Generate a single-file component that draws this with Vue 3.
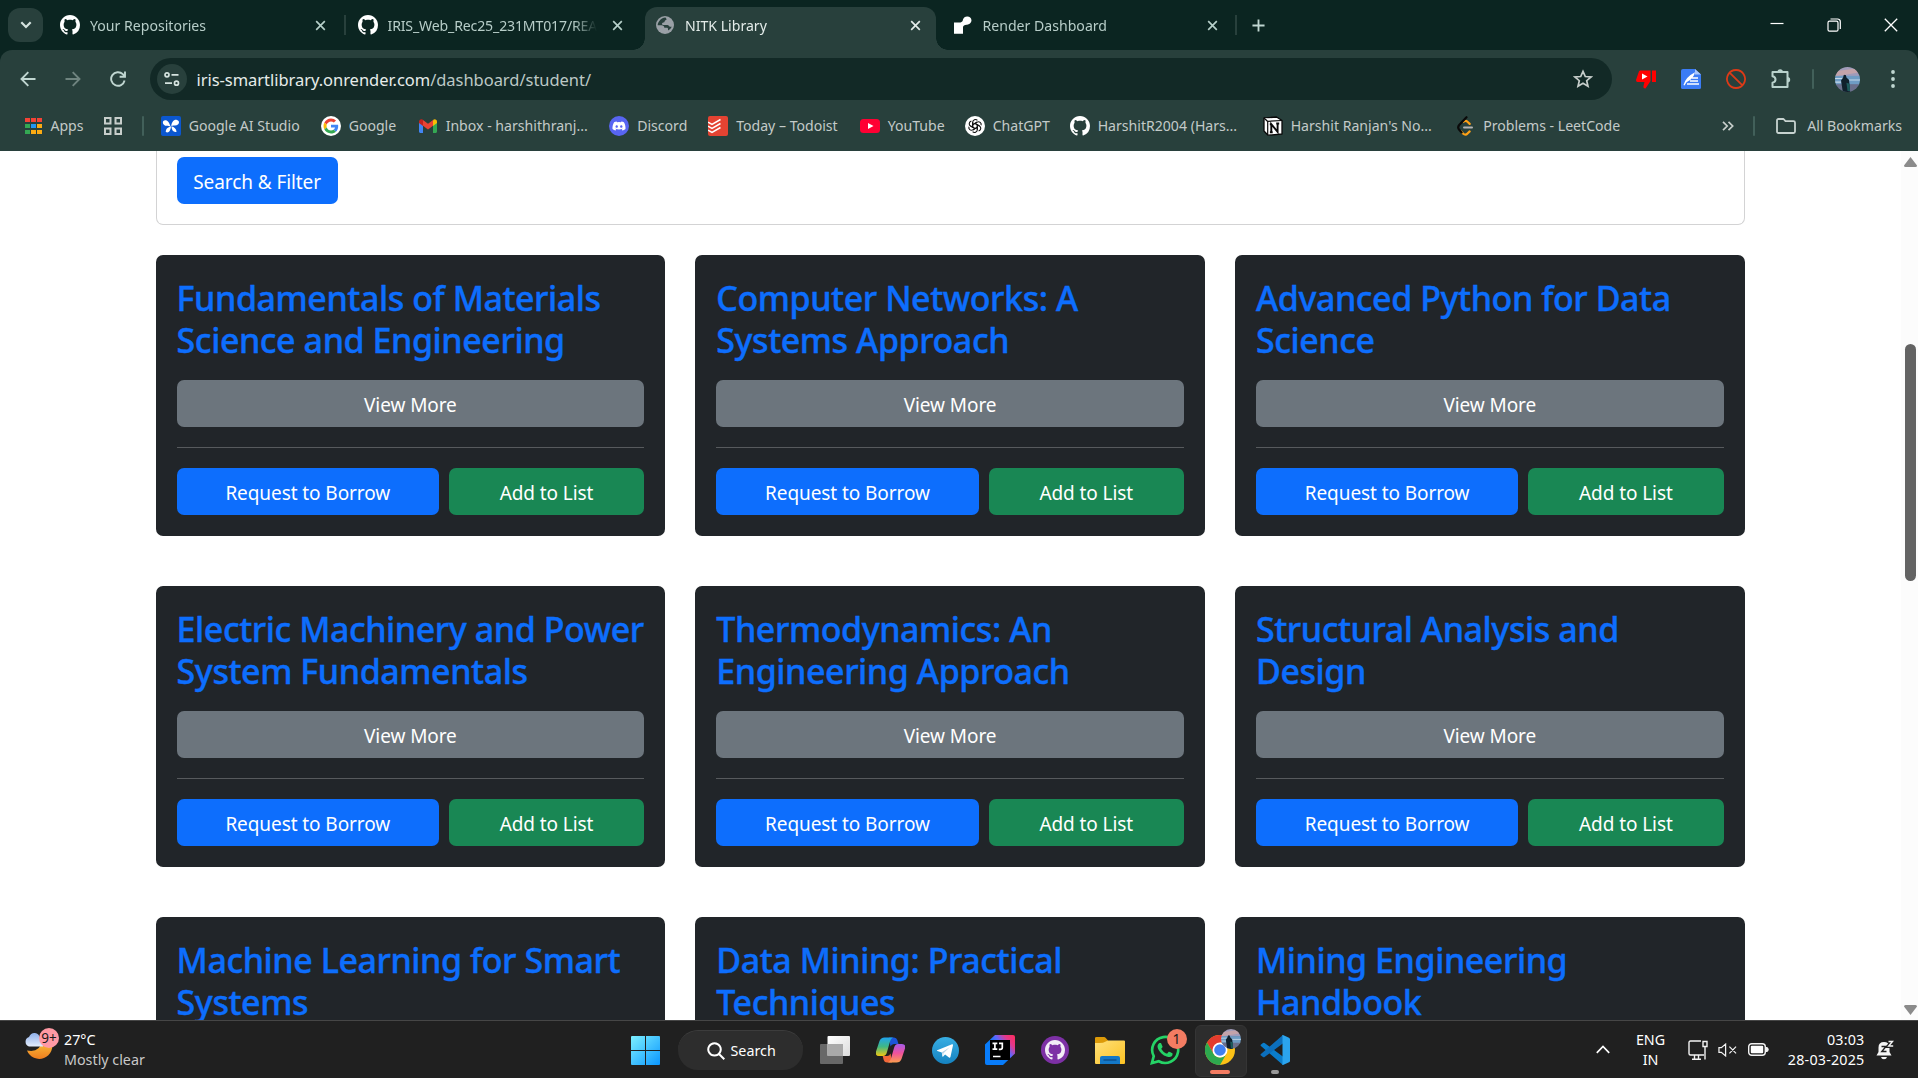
<script setup>
const tabs = [
  { title: 'Your Repositories', icon: 'github' },
  { title: 'IRIS_Web_Rec25_231MT017/README.md', icon: 'github', sep: 'left', tight: true },
  { title: 'NITK Library', icon: 'globe', active: true },
  { title: 'Render Dashboard', icon: 'render', sep: 'right' },
]

const bookmarks = [
  { label: 'Google AI Studio', icon: 'aistudio', width: 160 },
  { label: 'Google', icon: 'google', width: 97 },
  { label: 'Inbox - harshithranj...', icon: 'gmail', width: 191.5 },
  { label: 'Discord', icon: 'discord', width: 99 },
  { label: 'Today – Todoist', icon: 'todoist', width: 151.5 },
  { label: 'YouTube', icon: 'youtube', width: 105 },
  { label: 'ChatGPT', icon: 'chatgpt', width: 105 },
  { label: 'HarshitR2004 (Hars...', icon: 'github', width: 193 },
  { label: "Harshit Ranjan's No...", icon: 'notion', width: 192.5 },
  { label: 'Problems - LeetCode', icon: 'leetcode', width: 190.5 },
]

const books = [
  ['Fundamentals of Materials', 'Science and Engineering'],
  ['Computer Networks: A', 'Systems Approach'],
  ['Advanced Python for Data', 'Science'],
  ['Electric Machinery and Power', 'System Fundamentals'],
  ['Thermodynamics: An', 'Engineering Approach'],
  ['Structural Analysis and', 'Design'],
  ['Machine Learning for Smart', 'Systems'],
  ['Data Mining: Practical', 'Techniques'],
  ['Mining Engineering', 'Handbook'],
]

const appColors = ['#f44336', '#f44336', '#f44336', '#34a853', '#2196f3', '#fbab13', '#34a853', '#fbab13', '#fbab13']
</script>

<template>
  <div class="screen">
    <svg class="defs" width="0" height="0" aria-hidden="true">
      <symbol id="i-github" viewBox="0 0 16 16">
        <path fill="currentColor" d="M8 0C3.58 0 0 3.58 0 8c0 3.54 2.29 6.53 5.47 7.59.4.07.55-.17.55-.38 0-.19-.01-.82-.01-1.49-2.01.37-2.53-.49-2.69-.94-.09-.23-.48-.94-.82-1.13-.28-.15-.68-.52-.01-.53.63-.01 1.08.58 1.23.82.72 1.21 1.87.87 2.33.66.07-.52.28-.87.51-1.07-1.78-.2-3.64-.89-3.64-3.95 0-.87.31-1.59.82-2.15-.08-.2-.36-1.02.08-2.12 0 0 .67-.21 2.2.82.64-.18 1.32-.27 2-.27s1.36.09 2 .27c1.53-1.04 2.2-.82 2.2-.82.44 1.1.16 1.92.08 2.12.51.56.82 1.27.82 2.15 0 3.07-1.87 3.75-3.65 3.95.29.25.54.73.54 1.48 0 1.07-.01 1.93-.01 2.2 0 .21.15.46.55.38A8.01 8.01 0 0 0 16 8c0-4.42-3.58-8-8-8z" />
      </symbol>
      <symbol id="i-globe" viewBox="0 0 20 20">
        <circle cx="10" cy="10" r="9" fill="#9aa0a6" />
        <path fill="#28403c" d="M10.500 2.600C8.500 2.500 5.500 4 4 6.500 3 8 2.700 9 2.700 10.300H6.500Q9.300 10.400 9.300 12.800H12Q13 12.800 13 14V15.600Q15.500 14.500 16.800 11.800C15.500 11.800 14.500 11.800 14 11Q13.500 10 12.300 10H8.300Q7 10 7 8.700 7 7.500 8.300 7.400 9.600 7.400 9.700 6.200 9.700 5.200 11 5 12.300 4.700 10.500 2.600Z" />
      </symbol>
      <symbol id="i-render" viewBox="0 0 20 20">
        <path fill="#fff" d="M18.500 5.200A4.400 4.400 0 0 0 10 4.600C9.700 6.400 9 7.200 7.500 7.400L1 7.500V18.800H10V12.300C10 10.500 11.500 9.800 13.500 9.700A4.500 4.500 0 0 0 18.500 5.200Z" />
      </symbol>
      <symbol id="i-aistudio" viewBox="0 0 20 20">
        <rect width="20" height="20" rx="2" fill="#0b57d0" />
        <path fill="#fff" d="M9.700 10.500C7.500 9.500 3.500 11 2 7.500 1 4 5.200 3.500 7 5.600 8.600 7.300 8.600 9 9.700 10.500ZM10.300 10C10.600 6 13 3.200 16 4c3 .8 2.400 4.600-.4 5.200C13.400 9.700 11.500 9.300 10.300 10ZM10 10.500C7 11 4.600 13 4.800 16c3 1.500 4.800-1.500 5.200-5.500ZM10.400 10.300c3 .7 4.800 2.600 5.200 5.500-3 .9-5-1.500-5.200-5.500Z" />
      </symbol>
      <symbol id="i-google" viewBox="0 0 20 20">
        <circle cx="10" cy="10" r="10" fill="#fff" />
        <g transform="translate(2.500 2.500) scale(.3125)">
          <path fill="#EA4335" d="M24 9.500c3.540 0 6.710 1.220 9.210 3.600l6.850-6.850C35.900 2.380 30.470 0 24 0 14.620 0 6.510 5.380 2.560 13.220l7.980 6.190C12.430 13.720 17.740 9.500 24 9.500z" />
          <path fill="#4285F4" d="M46.980 24.550c0-1.570-.15-3.090-.38-4.550H24v9.020h12.940c-.58 2.960-2.260 5.480-4.780 7.180l7.730 6c4.510-4.180 7.090-10.360 7.090-17.650z" />
          <path fill="#FBBC05" d="M10.530 28.590c-.48-1.450-.76-2.990-.76-4.590s.27-3.140.76-4.590l-7.980-6.190C.92 16.460 0 20.120 0 24c0 3.880.92 7.540 2.560 10.780l7.970-6.190z" />
          <path fill="#34A853" d="M24 48c6.480 0 11.930-2.130 15.890-5.810l-7.730-6c-2.150 1.450-4.920 2.300-8.160 2.300-6.260 0-11.570-4.220-13.470-9.910l-7.980 6.190C6.510 42.620 14.620 48 24 48z" />
        </g>
      </symbol>
      <symbol id="i-gmail" viewBox="0 0 20 20">
        <path fill="#4285f4" d="M1 6v9.500c0 .8.700 1.500 1.500 1.500H5V9z" />
        <path fill="#34a853" d="M15 17h2.500c.8 0 1.500-.7 1.500-1.500V6l-4 3z" />
        <path fill="#fbbc04" d="M15 5v5l4-3V5.500c0-2-2.200-3-3.700-1.800z" />
        <path fill="#ea4335" d="M5 9.800V4l5 3.800L15 4v5.800l-5 3.800z" />
        <path fill="#c5221f" d="M1 5.500V7l4 3V4l-.5-.4C3 2.500 1 3.500 1 5.500z" />
      </symbol>
      <symbol id="i-discord" viewBox="0 0 20 20">
        <circle cx="10" cy="10" r="10" fill="#5865f2" />
        <path fill="#fff" d="M14.900 6.300a9 9 0 0 0-2.500-.8l-.4.700a9 9 0 0 0-4 0l-.4-.7a9 9 0 0 0-2.500.8C3.700 8.600 3.300 10.900 3.500 13.100c1 .8 2 1.200 3.100 1.500l.7-1.100-1-.5.2-.2c2.200 1 4.800 1 7 0l.2.200-1 .5.700 1.100c1.100-.3 2.100-.7 3.100-1.500.2-2.600-.4-4.800-1.600-6.800zM7.700 11.800c-.7 0-1.200-.6-1.200-1.300s.5-1.300 1.200-1.300 1.200.6 1.200 1.300-.5 1.300-1.200 1.300zm4.600 0c-.7 0-1.200-.6-1.200-1.300s.5-1.300 1.200-1.300 1.200.6 1.200 1.300-.5 1.300-1.200 1.300z" />
      </symbol>
      <symbol id="i-todoist" viewBox="0 0 20 20">
        <rect width="20" height="20" rx="2" fill="#e44332" />
        <path fill="none" stroke="#fff" stroke-width="1.500" d="M0 6.200l4 2.100 8.500-4.800M0 10.200l4 2.100 8.500-4.800M0 14.200l4 2.100 8.500-4.800" />
      </symbol>
      <symbol id="i-youtube" viewBox="0 0 20 20">
        <rect y="3" width="20" height="14" rx="3.500" fill="#ff0033" />
        <path fill="#fff" d="M8 7l5.500 3L8 13z" />
      </symbol>
      <symbol id="i-chatgpt" viewBox="0 0 20 20">
        <circle cx="10" cy="10" r="10" fill="#fff" />
        <g fill="none" stroke="#111" stroke-width="1.100">
          <path v-for="a in 6" :key="a" :transform="`rotate(${a * 60} 10 10)`" d="M7.700 11.200V6.200a2.700 2.700 0 0 1 4.700-1.800M7.700 8.700l4.500-2.600" />
        </g>
      </symbol>
      <symbol id="i-notion" viewBox="0 0 20 20">
        <path fill="#fff" stroke="#0a0a0a" stroke-width="1.300" stroke-linejoin="round" d="M1 2l12.500-1L19 4.500V18L5 19.200 1 15z" />
        <path fill="#fff" stroke="#0a0a0a" stroke-width="1.200" d="M1 2l3.500 3.300L19 4.500M4.700 5.300V19" />
        <path fill="none" stroke="#0a0a0a" stroke-width="1.900" d="M8.300 16.300V8.200L14.600 15.800V7.400M6.800 8.200h2M13.200 7.500h3M6.900 16.300h2.800" />
      </symbol>
      <symbol id="i-leetcode" viewBox="0 0 20 20">
        <path fill="none" stroke="#b3b3b3" stroke-width="2" stroke-linecap="round" d="M9 11.500h8" />
        <path fill="none" stroke="#ffa116" stroke-width="2.200" stroke-linecap="round" d="M8.500 5.800q2-2 4 0l2.200 2.100M6.200 15.500l1.800 2q2.500 2.300 4.500 0l2.200-2.100" />
        <path fill="none" stroke="#0a0a0a" stroke-width="2.200" stroke-linecap="round" d="M11.500 1.200L4.200 9q-2 2.600 0 4.800l2.400 2.600" />
      </symbol>
      <symbol id="i-avatar" viewBox="0 0 24 24">
        <clipPath id="round"><circle cx="12" cy="12" r="12" /></clipPath>
        <g clip-path="url(#round)">
          <rect width="24" height="9" fill="#a09bb9" />
          <path fill="#d3a7a4" d="M0 4L24 1v4L0 9z" opacity=".7" />
          <rect y="8.500" width="24" height="9" fill="#6f9cc4" />
          <path stroke="#c5d8e8" stroke-width="1" d="M0 11h8M13 12.500h11M0 14.500h6" />
          <rect y="16.500" width="24" height="8" fill="#6b6f8c" />
          <path fill="#10202c" d="M8.300 8q1.200-1.200 2.200 0l.5 2 2.500 2.500L14.500 24H7.500L5.800 13l2-3z" />
          <path fill="#1d5a5c" d="M11 15l3 1 .5 7h-2.500z" />
        </g>
      </symbol>
      <symbol id="i-x" viewBox="0 0 12 12">
        <path fill="none" stroke="currentColor" stroke-width="1.800" d="M1.300 1.300l9.400 9.400M10.700 1.300l-9.400 9.400" />
      </symbol>
    </svg>

    <header class="tabstrip">
      <button class="tab-search">
        <svg width="12" height="8" viewBox="0 0 12 8"><path fill="none" stroke="#d5e3df" stroke-width="2.200" d="M1.300 1.300L6 6l4.700-4.700" /></svg>
      </button>
      <div v-for="t in tabs" :key="t.title" class="tab" :class="[{ active: t.active, tight: t.tight }, t.sep && 'sep-' + t.sep]">
        <svg class="favicon"><use :href="'#i-' + t.icon" /></svg>
        <span class="tab-title">{{ t.title }}</span>
        <svg class="tab-close"><use href="#i-x" /></svg>
      </div>
      <svg class="new-tab" viewBox="0 0 14 14"><path stroke="#c0d6d1" stroke-width="2" d="M7 .5v13M.5 7h13" /></svg>
      <div class="win-controls">
        <svg viewBox="0 0 14 14"><path stroke="#fff" stroke-width="1.200" d="M.5 5.500h13" /></svg>
        <svg viewBox="0 0 14 14" fill="none" stroke="#fff" stroke-width="1.200"><rect x="1" y="3.200" width="10" height="10" rx="1.500" /><path d="M3.500 1h7A2.700 2.700 0 0 1 13.300 3.800V11" /></svg>
        <svg viewBox="0 0 14 14"><path stroke="#fff" stroke-width="1.300" d="M.8.8l12.400 12.400M13.200.8L.8 13.200" /></svg>
      </div>
    </header>

    <section class="toolbar">
      <div class="nav-row">
        <svg class="nav" viewBox="0 0 16 16"><path fill="none" stroke="#c0d6d1" stroke-width="1.900" d="M15.500 8H1.800M8.300 1.200L1.500 8l6.800 6.800" /></svg>
        <svg class="nav" viewBox="0 0 16 16"><path fill="none" stroke="#6f847f" stroke-width="1.900" d="M.5 8h13.700M7.700 1.200L14.500 8l-6.800 6.800" /></svg>
        <svg class="nav" viewBox="0 0 16 16"><path fill="none" stroke="#c0d6d1" stroke-width="1.900" d="M14.600 9.500A6.800 6.800 0 1 1 12.800 3.200L14.700 5.300M15 .5v5.300H9.600" /></svg>
        <div class="omnibox">
          <span class="site-chip">
            <svg width="18" height="16" viewBox="0 0 18 16" fill="none" stroke="#d5e3df" stroke-width="1.700"><circle cx="4" cy="3.800" r="2" /><path d="M8.500 3.800H15.500M2 12.200H9" /><circle cx="13.500" cy="12.200" r="2" /></svg>
          </span>
          <span class="url">iris-smartlibrary.onrender.com<i>/dashboard/student/</i></span>
          <svg class="star" viewBox="0 0 20 20"><path fill="none" stroke="#c7cecb" stroke-width="1.700" d="M10 2.300l2.300 5.200 5.700.5-4.300 3.700 1.300 5.600-5-3-5 3 1.300-5.600L2 8l5.700-.5z" /></svg>
        </div>
        <div class="extensions">
          <svg viewBox="0 0 20 20"><path fill="#f00" d="M4 1.500H14.500V12L9.500 19.500Q7 19.500 7.500 17L8.500 13H1.500Q0 13 0 11L3 2.300ZM16 1.500h4V13h-4z" /><path fill="#fff" d="M6 4.500l5.500 3L6 10.500z" /></svg>
          <svg viewBox="0 0 20 20"><path fill="#3b7cf5" d="M2 0h12l6 5.500V18.500Q20 20 18.500 20H1.500Q0 20 0 18.500V1.500Q0 0 2 0z" /><path fill="#a9c7fb" d="M14 0l6 5.500h-6z" /><path fill="#fff" d="M2.500 16Q4.500 8 14 3.200 12.500 10 5.500 13.300L3.500 16.500z" /><path stroke="#fff" stroke-width="1.400" d="M11 9h6M9 12h8M6 15h12" /></svg>
          <svg viewBox="0 0 20 20"><path fill="none" stroke="#dd3a17" stroke-width="1.800" d="M10 1a9 9 0 1 0 .01 0zM3.800 3.800l12.400 12.400" /></svg>
          <svg viewBox="0 0 20 20"><path fill="none" stroke="#b9d2cc" stroke-width="2" stroke-linejoin="round" d="M1.500 3H16.500V18H1.500V13.700Q4.500 13 4.500 10.500T1.500 7.300Z" /><path fill="#b9d2cc" d="M6.500 3a2.700 2.700 0 0 1 5.400 0zM16.500 8a2.700 2.700 0 0 1 0 5.400z" /></svg>
        </div>
        <i class="vsep toolbar-sep"></i>
        <svg class="avatar"><use href="#i-avatar" /></svg>
        <svg class="kebab" viewBox="0 0 4 18" fill="#c0d6d1"><circle cx="2" cy="2" r="1.900" /><circle cx="2" cy="9" r="1.900" /><circle cx="2" cy="16" r="1.900" /></svg>
      </div>

      <nav class="bookmarks">
        <div class="apps">
          <span class="apps-grid"><i v-for="(c, n) in appColors" :key="n" :style="{ background: c }"></i></span>
          <span>Apps</span>
        </div>
        <svg class="groups" viewBox="0 0 18 18" fill="none" stroke="#c7cecb" stroke-width="2"><path d="M1 1h5.500v5.500H1zM11.500 1H17v5.500h-5.500zM1 11.500h5.500V17H1zM11.500 11.500H17V17h-5.500z" /></svg>
        <i class="vsep"></i>
        <div class="bm-list">
          <div v-for="b in bookmarks" :key="b.label" class="bm" :style="{ width: b.width + 'px' }">
            <svg class="favicon"><use :href="'#i-' + b.icon" /></svg>
            <span>{{ b.label }}</span>
          </div>
        </div>
        <svg class="more" viewBox="0 0 12 10"><path fill="none" stroke="#c7cecb" stroke-width="1.700" d="M1 .8L5.200 5 1 9.200M6.500.8L10.700 5 6.500 9.200" /></svg>
        <i class="vsep"></i>
        <svg class="folder" viewBox="0 0 20 16"><path fill="none" stroke="#c7d3d0" stroke-width="1.800" stroke-linejoin="round" d="M1 2.500Q1 1 2.500 1H7.500L9.500 3.200H17.500Q19 3.200 19 4.700V13.500Q19 15 17.500 15H2.500Q1 15 1 13.500Z" /></svg>
        <span>All Bookmarks</span>
      </nav>
    </section>

    <main class="viewport">
      <div class="page">
        <div class="filter-card"><button class="btn primary">Search &amp; Filter</button></div>
        <div class="grid">
          <article v-for="b in books" :key="b[0]" class="card">
            <h3>{{ b[0] }}<br />{{ b[1] }}</h3>
            <button class="btn secondary">View More</button>
            <hr />
            <div class="actions">
              <button class="btn primary borrow">Request to Borrow</button>
              <button class="btn success add">Add to List</button>
            </div>
          </article>
        </div>
      </div>
      <div class="scrollbar">
        <svg width="13" height="10" viewBox="0 0 13 10"><path fill="#8b8b8b" d="M6.500 0L13 8.500Q13 10 11.500 10h-10Q0 10 0 8.500z" /></svg>
        <div class="track"><div class="thumb"></div></div>
        <svg width="13" height="10" viewBox="0 0 13 10"><path fill="#8b8b8b" d="M6.500 10L13 1.500Q13 0 11.500 0h-10Q0 0 0 1.500z" /></svg>
      </div>
    </main>

    <footer class="taskbar">
      <div class="weather">
        <div class="weather-icon">
          <svg width="34" height="36" viewBox="0 0 34 36">
            <defs>
              <linearGradient id="moon" x1="0" y1="0" x2="0" y2="1"><stop offset="0" stop-color="#f9c23c" /><stop offset="1" stop-color="#ee7d1e" /></linearGradient>
              <linearGradient id="cloud" x1="0" y1="0" x2="0" y2="1"><stop offset="0" stop-color="#8fb0ea" /><stop offset="1" stop-color="#e4edfc" /></linearGradient>
            </defs>
            <path fill="url(#moon)" d="M27.500 15a12.500 12.500 0 1 1-24.500 9.500Q16 27 18 15z" />
            <path fill="url(#cloud)" d="M5 20.500a5 5 0 0 1 0-9.500Q7 6.500 11 7q4 .3 5 5h3v8.500z" />
          </svg>
          <span class="badge-pink">9+</span>
        </div>
        <div class="weather-text"><b>27°C</b><span>Mostly clear</span></div>
      </div>

      <div class="dock">
        <div class="slot">
          <svg width="29" height="29" viewBox="0 0 29 29"><defs><linearGradient id="win" x1="0" y1="0" x2="1" y2="1"><stop offset="0" stop-color="#7df0ff" /><stop offset="1" stop-color="#0a96ff" /></linearGradient></defs><path fill="url(#win)" d="M1 0H14V14H0V1Q0 0 1 0zM15 0H28Q29 0 29 1V14H15zM0 15H14V29H1Q0 29 0 28zM15 15H29V28Q29 29 28 29H15z" /></svg>
        </div>
        <div class="slot search-slot">
          <div class="search"><svg width="18" height="18" viewBox="0 0 18 18"><path fill="none" stroke="#fff" stroke-width="2" d="M7.500 1.200a6.200 6.200 0 1 0 .01 0zM12 12l5.300 5.300" /></svg><span>Search</span></div>
        </div>
        <div class="slot">
          <svg width="30" height="28" viewBox="0 0 30 28"><defs><linearGradient id="tv" x1="0" y1="0" x2="1" y2="1"><stop offset="0" stop-color="#fff" /><stop offset="1" stop-color="#dcdcdc" /></linearGradient></defs><rect y="8" width="23" height="20" rx="1" fill="#686868" /><rect x="7.500" width="22.500" height="20" rx="1" fill="url(#tv)" /><path fill="#a9a9a9" d="M7.500 8H23V20H7.500z" /></svg>
        </div>
        <div class="slot">
          <svg width="29" height="26" viewBox="0 0 29 26">
            <defs>
              <linearGradient id="cpa" x1="0" y1="0" x2="0" y2="1"><stop offset="0" stop-color="#1fa4ee" /><stop offset=".5" stop-color="#41b883" /><stop offset="1" stop-color="#f2c811" /></linearGradient>
              <linearGradient id="cpb" x1="0" y1="0" x2="0" y2="1"><stop offset="0" stop-color="#a55bea" /><stop offset=".5" stop-color="#f0529b" /><stop offset="1" stop-color="#fb9d4f" /></linearGradient>
            </defs>
            <path fill="#1b55d8" d="M13 .5h5q2.500 0 3.300 2.500L22.500 7H18q-2.500 0-3.500 2.500z" />
            <path fill="url(#cpa)" d="M8.500.5H17Q14.800 1.500 14 4.500L11 15q-1 4-4 4H3q-4 0-3-4.500L3.500 4Q4.800.5 8.500.5z" />
            <path fill="#f2683a" d="M16 25.500H11q-2.500 0-3.300-2.500L6.700 19H11q2.500 0 3.500-2.500z" />
            <path fill="url(#cpb)" d="M20.500 25.500H12q2.200-1 3-4L18 11q1-4 4-4h4q4 0 3 4.500L25.500 22q-1.300 3.500-5 3.500z" />
          </svg>
        </div>
        <div class="slot">
          <svg width="27" height="27" viewBox="0 0 27 27"><defs><linearGradient id="tg" x1="0" y1="0" x2="0" y2="1"><stop offset="0" stop-color="#38aee3" /><stop offset="1" stop-color="#1582c0" /></linearGradient></defs><circle cx="13.500" cy="13.500" r="13.500" fill="url(#tg)" /><path fill="#fff" d="M5.200 13.200L20 7.300q1.200-.3 1 1L18.500 19.800q-.4 1.300-1.500.7l-3.900-2.900-1.900 1.900q-.8.600-.9-.5l-.5-3.600-4.500-1.400q-1-.4-.1-.8z" /><path fill="#b7d4e8" d="M9.900 15.200l7.800-5-6.200 6-.4 3z" /></svg>
        </div>
        <div class="slot">
          <svg width="30" height="30" viewBox="0 0 30 30"><defs><linearGradient id="ij" x1="1" y1="0" x2="0" y2=".8"><stop offset="0" stop-color="#ff2c5a" /><stop offset=".22" stop-color="#e5388a" /><stop offset=".42" stop-color="#5b67ff" /><stop offset=".6" stop-color="#087cfa" /></linearGradient></defs><path fill="url(#ij)" d="M10 0H28Q30 0 30 2V18.500L18 30H2Q0 30 0 28V9.500z" /><rect x="5" y="5" width="20" height="20" /><path fill="none" stroke="#fff" stroke-width="1.700" d="M7.500 8.300h4.800M9.900 8v6M7.500 14.200h4.800M14 8.300h3.300v4.200q0 1.800-2 1.800h-1.500M8 21.500h7.500" /></svg>
        </div>
        <div class="slot"><span class="gh-desktop"><svg><use href="#i-github" /></svg></span></div>
        <div class="slot">
          <svg width="30" height="28" viewBox="0 0 30 28"><defs><linearGradient id="fx" x1="0" y1="0" x2="1" y2="1"><stop offset="0" stop-color="#ffe07a" /><stop offset="1" stop-color="#fcc222" /></linearGradient></defs><path fill="#dd9a08" d="M0 2Q0 1 1.500 1H9q1 0 1.800 1L13 4.500v6H0z" /><path fill="url(#fx)" d="M0 7q5 0 8-.2L13 4.500H29q1 0 1 1V27q0 1-1 1H1q-1 0-1-1z" /><path fill="#1478c8" d="M5 28V22q0-2 2-2H23q2 0 2 2v6z" /><path stroke="#0c4b87" stroke-width="1.300" d="M8.500 24h13" /></svg>
        </div>
        <div class="slot">
          <svg width="30" height="30" viewBox="0 0 24 24" fill="#25d366"><path d="M17.472 14.382c-.297-.149-1.758-.867-2.030-.967-.273-.099-.471-.148-.670.150-.197.297-.767.966-.940 1.164-.173.199-.347.223-.644.075-.297-.150-1.255-.463-2.390-1.475-.883-.788-1.480-1.761-1.653-2.059-.173-.297-.018-.458.130-.606.134-.133.298-.347.446-.520.149-.174.198-.298.298-.497.099-.198.050-.371-.025-.520-.075-.149-.669-1.612-.916-2.207-.242-.579-.487-.500-.669-.510-.173-.008-.371-.010-.570-.010-.198 0-.520.074-.792.372-.272.297-1.040 1.016-1.040 2.479 0 1.462 1.065 2.875 1.213 3.074.149.198 2.096 3.200 5.077 4.487.709.306 1.262.489 1.694.625.712.227 1.360.195 1.871.118.571-.085 1.758-.719 2.006-1.413.248-.694.248-1.289.173-1.413-.074-.124-.272-.198-.570-.347" /><path fill="none" stroke="#25d366" stroke-width="2.100" d="M1.500 22.500l1.500-5.600A10.400 10.400 0 1 1 7 21z" /></svg>
          <span class="badge-coral">1</span>
        </div>
        <div class="slot running">
          <svg width="30" height="30" viewBox="0 0 48 48"><circle cx="24" cy="24" r="24" fill="#fbc116" /><path fill="#e33b2e" d="M3.200 12A24 24 0 0 1 44.800 12H24L13.600 30z" /><path fill="#2da94f" d="M3.200 12A24 24 0 0 0 24 48L34.400 30A12 12 0 0 1 13.600 30z" /><circle cx="24" cy="24" r="12" fill="#fff" /><circle cx="24" cy="24" r="9.300" fill="#3f7ff0" /></svg>
          <svg class="mini-avatar"><use href="#i-avatar" /></svg>
          <i class="active-pill"></i>
        </div>
        <div class="slot">
          <svg width="30" height="30" viewBox="0 0 30 30"><path fill="#0a7dcb" d="M1 9.500L3 8q.8-.5 1.600.1L23.500 22V29.500q-1.200 0-2-.8L.9 11q-.8-.8.1-1.500z" /><path fill="#0c6fbd" d="M1 20.500L3 22q.8.500 1.600-.1L23.500 8V.5q-1.200 0-2 .8L.9 19q-.8.800.1 1.500z" /><path fill="#2ba4ee" d="M22 .3q.7-.5 1.500-.1L29 2.800q1 .5 1 1.500V25.700q0 1-1 1.500L23.500 29.800q-1 .3-1.800-.4.800.3.800-1V1.600q0-1-.5-1.300z" /></svg>
          <i class="idle-pill"></i>
        </div>
      </div>

      <div class="tray">
        <svg class="tray-up" viewBox="0 0 14 9"><path fill="none" stroke="#fff" stroke-width="1.700" d="M.8 7.800L7 1.500l6.200 6.300" /></svg>
        <div class="lang"><span>ENG</span><span>IN</span></div>
        <svg class="tray-net" viewBox="0 0 20 20" fill="none" stroke="#f2f2f2" stroke-width="1.400"><path d="M13 1H2.500Q1 1 1 2.500V13.500Q1 15 2.500 15H16M4 19.200h9M6.500 15v4M10.500 15v4M15 1.500h4v5h-4zM17 6.500V19.500" /></svg>
        <svg class="tray-vol" viewBox="0 0 20 14" fill="none" stroke="#f2f2f2" stroke-width="1.300"><path d="M1 4.500H3.500L8 .8V13.200L3.500 9.500H1zM12 3.500l7 7M19 3.500l-7 7" /></svg>
        <svg class="tray-bat" viewBox="0 0 21 13"><rect x=".7" y=".7" width="16.600" height="11.600" rx="3" fill="none" stroke="#f2f2f2" stroke-width="1.400" /><rect x="2.800" y="2.800" width="12.400" height="7.400" rx="1" fill="#fff" /><path fill="#f2f2f2" d="M18 4h1.200q1.500 1 1.500 2.500T19.200 9H18z" /></svg>
        <div class="clock"><span>03:03</span><span>28-03-2025</span></div>
        <svg class="tray-bell" viewBox="0 0 18 20"><path fill="#f5f5f5" d="M8 2Q13 2 13.500 7V12L15.500 15.500H.5L2.500 12V7.500Q2.500 2 8 2zM5 17h6q-.5 2.300-3 2.300T5 17z" /><path fill="none" stroke="#202020" stroke-width="1.400" d="M5.500 6.500h4.500L5.800 11.500h4.700" /><path fill="none" stroke="#202020" stroke-width="4" d="M12.500 1.500h4L12.700 6h4" /><path fill="none" stroke="#f5f5f5" stroke-width="1.400" d="M12.500 1.500h4L12.700 6h4.500" /></svg>
      </div>
    </footer>
  </div>
</template>

<style>
body { overflow: hidden; }
</style>

<style scoped>
* { box-sizing: border-box; }
.screen { width: 1918px; height: 1078px; display: flex; flex-direction: column; overflow: hidden; font-family: "Noto Sans", "Open Sans", sans-serif; font-size: 14.100px; background: #0b2521; }
.defs { position: absolute; }
svg { display: block; flex: none; }
button { font: inherit; border: 0; padding: 0; }
span { white-space: nowrap; }

.tabstrip { height: 50px; display: flex; align-items: flex-start; padding-left: 8px; flex: none; }
.tab-search { width: 35px; height: 34px; margin: 8px 3px 0 0; border-radius: 12px; background: #28403c; display: flex; align-items: center; justify-content: center; }
.tab { position: relative; width: 297.500px; height: 50px; padding-left: 14px; display: flex; align-items: center; color: #b7cdc8; }
.tab > * { position: relative; }
.favicon { width: 20px; height: 20px; color: #fff; }
.tab-title { width: 210px; margin-left: 10px; overflow: hidden; mask-image: linear-gradient(90deg, #000 185px, transparent 209px); }
.tab.tight .tab-title { letter-spacing: -0.150px; }
.tab-close { width: 11px; height: 11px; margin-left: 14.500px; color: #b7d0ca; }
.tab.active { color: #e3ebe9; }
.tab.active .tab-close { color: #e3ebe9; }
.tab.active::before { content: ""; position: absolute; inset: 7px 3px 0 4px; background: #28403c; border-radius: 12px 12px 0 0; }
.tab.active::after { content: ""; position: absolute; left: -8px; right: -9px; bottom: 0; height: 12px; background: radial-gradient(circle at 0 0, transparent 11.500px, #28403c 12px) left / 12px 12px no-repeat, radial-gradient(circle at 12px 0, transparent 11.500px, #28403c 12px) right / 12px 12px no-repeat; }
.sep-left::before, .sep-right::before { content: ""; position: absolute; top: 15px; width: 2px; height: 20px; background: #28403c; }
.sep-left::before { left: 0; }
.sep-right::before { right: -1px; }
.new-tab { width: 13px; height: 13px; margin: 19px 0 0 16px; }
.win-controls { margin: 18px 20px 0 auto; display: flex; gap: 43px; }
.win-controls svg { width: 14px; height: 14px; }

.toolbar { height: 101px; flex: none; background: #28403c; border-radius: 12px 12px 0 0; display: flex; flex-direction: column; }
.nav-row { height: 58px; display: flex; align-items: center; padding-left: 20px; }
.nav { width: 16px; height: 16px; margin-right: 29px; }
.nav:nth-child(3) { margin-right: 24px; }
.omnibox { width: 1462px; height: 42px; border-radius: 21px; background: #122926; display: flex; align-items: center; padding: 0 19px 0 7px; }
.site-chip { width: 30px; height: 30px; border-radius: 50%; background: #28403c; display: flex; align-items: center; justify-content: center; }
.url { margin-left: 9.500px; font-size: 16.500px; color: #e6ecea; letter-spacing: -0.040px; }
.url i { font-style: normal; color: #bcc8c5; }
.star { width: 20px; height: 20px; margin-left: auto; }
.extensions { display: flex; gap: 25.200px; margin-left: 23.500px; }
.extensions svg { width: 20px; height: 20px; }
.vsep { width: 2px; height: 20px; border-radius: 1px; background: #42605a; flex: none; }
.toolbar-sep { margin-left: 21px; }
.avatar { width: 25px; height: 25px; margin-left: 21px; }
.kebab { width: 4px; height: 18px; margin-left: 30.500px; }

.bookmarks { height: 36px; display: flex; align-items: center; padding: 0 16px 0 25px; color: #c3cac8; }
.bookmarks span { margin-top: -2px; }
.apps { display: flex; align-items: center; gap: 8.500px; width: 79.500px; }
.bookmarks .apps-grid { margin-top: 0; display: grid; grid-template-columns: repeat(3, 4.500px); gap: 1.700px; grid-auto-rows: 4.500px; }
.groups { width: 18px; height: 18px; }
.bookmarks .vsep { margin-left: 19.500px; }
.bm-list { display: flex; margin-left: 17px; }
.bm { display: flex; align-items: center; gap: 8px; }
.more { width: 12px; height: 10px; margin-left: 76px; }
.folder { width: 20px; height: 16px; margin-left: 21px; margin-right: 11px; }

.viewport { height: 869px; flex: none; display: flex; overflow: hidden; background: #fff; }
.page { width: 1901px; padding-left: 155.600px; height: 869px; overflow: hidden; }
.filter-card { width: 1589.800px; height: 74px; border: 1px solid #d3d3d4; border-top: 0; border-radius: 0 0 7px 7px; padding: 6px 20px 0; }
.filter-card .btn { width: 161px; }
.grid { display: grid; grid-template-columns: repeat(3, 509.600px); column-gap: 30.100px; row-gap: 50px; margin-top: 30px; }
.card { height: 281px; padding: 21px; border-radius: 7px; background: #212529; }
h3 { margin: 0 0 20px; font-size: 34px; line-height: 42px; font-weight: 500; letter-spacing: -0.430px; color: #0d6efd; -webkit-text-stroke: .4px #0d6efd; height: 84px; white-space: nowrap; padding-top: 1px; }
.btn { display: block; height: 47px; border-radius: 7px; color: #fff; font-size: 19px; line-height: 45px; padding-top: 3px; letter-spacing: -0.080px; text-align: center; }
.primary { background: #0d6efd; }
.secondary { background: #6c757d; width: 100%; }
.success { background: #198754; }
.btn.primary, .btn.secondary, .btn.success { padding-top: 4px; line-height: 43px; padding-bottom: 0; }
.btn { display: flex; justify-content: center; align-items: flex-start; }
hr { border: 0; height: 1px; background: #575a5d; margin: 20px 0; }
.actions { display: flex; gap: 10px; }
.borrow { width: 262.300px; }
.add { flex: 1; }
.scrollbar { width: 17px; background: #fcfcfc; display: flex; flex-direction: column; align-items: center; padding: 6px 0 5px 2px; }
.track { flex: 1; padding-top: 177px; }
.thumb { width: 11px; height: 237px; border-radius: 6px; background: #636363; }

.taskbar { position: relative; height: 58px; flex: none; background: #202020; border-top: 1px solid #464646; display: flex; align-items: center; color: #fff; font-size: 14.300px; }
.weather { display: flex; width: 617.500px; height: 100%; padding-left: 24px; }
.weather-icon { position: relative; width: 40px; padding-top: 5px; }
.badge-pink { position: absolute; left: 15px; top: 7px; width: 20px; height: 20px; border-radius: 50%; background: #ff99a4; color: #1a1a1a; text-align: center; line-height: 20px; font-size: 13.500px; }
.weather-text, .lang, .clock { display: flex; flex-direction: column; line-height: 20px; }
.weather-text { padding-top: 9px; }
.weather-text b { font-weight: 400; }
.weather-text span { color: #c8c8c8; }
.dock { display: flex; height: 100%; }
.slot { position: relative; width: 55px; height: 100%; display: flex; align-items: center; justify-content: center; padding-top: 1px; }
.search-slot { width: 135px; }
.search { width: 125px; height: 40px; border-radius: 20px; background: #2d2d2d; border-top: 1px solid #3c3c3c; display: flex; align-items: center; gap: 6px; padding-left: 29px; }
.gh-desktop { width: 28px; height: 28px; border-radius: 50%; background: #7d30a5; display: flex; align-items: center; justify-content: center; color: #f3ecf7; }
.gh-desktop svg { width: 20px; height: 20px; }
.badge-coral { position: absolute; left: 29px; top: 8px; width: 20px; height: 20px; border-radius: 50%; background: #f47c62; color: #1a1a1a; text-align: center; line-height: 20px; font-size: 14px; }
.running::before { content: ""; position: absolute; left: 2.500px; top: 4px; width: 50px; height: 50px; border-radius: 6px; background: #2d2d2d; border: 1px solid #353535; }
.running svg { position: relative; }
.running .mini-avatar { position: absolute; left: 28.500px; top: 8px; width: 20px; height: 20px; }
.active-pill, .idle-pill { position: absolute; top: 49px; height: 4px; border-radius: 2px; }
.active-pill { left: 17.500px; width: 20px; background: #f47c62; }
.idle-pill { left: 23.500px; width: 8px; background: #9a9a9a; }
.tray { margin-left: auto; display: flex; align-items: center; padding: 0 24px 0 0; }
.tray-up { width: 14px; height: 9px; }
.lang { align-items: center; width: 40px; margin-left: 21px; }
.tray-net { width: 20px; height: 20px; margin-left: 17px; }
.tray-vol { width: 19px; height: 14px; margin-left: 10px; }
.tray-bat { width: 21px; height: 13px; margin-left: 11px; }
.clock { align-items: flex-end; width: 79px; margin-left: 17px; letter-spacing: 0.200px; }
.tray-bell { width: 18px; height: 20px; margin-left: 11.500px; }
</style>
